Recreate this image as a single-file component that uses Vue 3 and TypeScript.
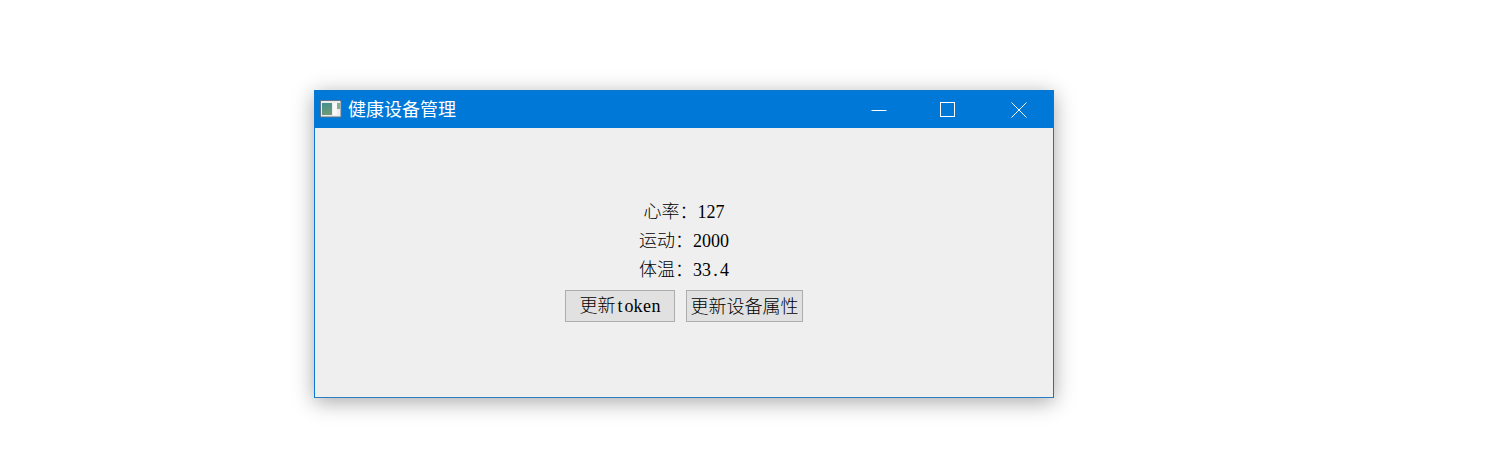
<script setup lang="ts">
const rows: { label: string; value: string }[] = [
  { label: '心率：', value: '127' },
  { label: '运动：', value: '2000' },
  { label: '体温：', value: '33.4' },
]
</script>

<template>
  <div class="desktop">
    <div class="window">
      <div class="titlebar">
        <svg class="app-icon" width="22" height="18" viewBox="0 0 22 18">
          <defs>
            <linearGradient id="pane" x1="0" y1="0" x2="0.2" y2="1">
              <stop offset="0" stop-color="#3f8f8f" />
              <stop offset="1" stop-color="#6f9a78" />
            </linearGradient>
          </defs>
          <rect x="0.5" y="0.5" width="20.5" height="16.5" fill="#ececec" stroke="#5f7488" />
          <rect x="2" y="3" width="10" height="12" fill="url(#pane)" />
          <rect x="13" y="3" width="4" height="12" fill="#f8f8f8" />
          <rect x="17" y="3" width="3" height="6" fill="#7fb08f" />
        </svg>
        <span class="title">健康设备管理</span>
        <div class="controls">
          <div class="control nudge">
            <svg width="16" height="16" viewBox="0 0 16 16"><path d="M0.5 8.5H15.5" stroke="#fff" fill="none" /></svg>
          </div>
          <div class="control">
            <svg width="16" height="16" viewBox="0 0 16 16"><rect x="0.5" y="0.5" width="14" height="14" stroke="#fff" fill="none" /></svg>
          </div>
          <div class="control nudge">
            <svg width="16" height="16" viewBox="0 0 16 16"><path d="M0.5 0.5L15.5 15.5M15.5 0.5L0.5 15.5" stroke="#fff" fill="none" /></svg>
          </div>
        </div>
      </div>
      <div class="client">
        <div v-for="row in rows" :key="row.label" class="row">
          <span>{{ row.label }}</span><span v-for="(ch, i) in row.value" :key="i" class="cell">{{ ch }}</span>
        </div>
        <div class="buttons">
          <button class="btn first" type="button">更新<span v-for="(ch, i) in 'token'" :key="i" class="cell">{{ ch }}</span></button>
          <button class="btn second" type="button">更新设备属性</button>
        </div>
      </div>
    </div>
  </div>
</template>

<style>
html, body { background: #fff; margin: 0; }
</style>

<style scoped>
.desktop {
  position: relative;
  width: 1503px;
  height: 465px;
  overflow: hidden;
  background: #fff;
}
.window {
  position: absolute;
  left: 314px;
  top: 90px;
  width: 740px;
  height: 308px;
  box-sizing: border-box;
  border: 1px solid #0a78d2;
  border-bottom-color: #2a7cc4;
  background: #efefef;
  display: flex;
  flex-direction: column;
  box-shadow: 0 4px 20px rgba(0, 0, 0, 0.34);
}
.titlebar {
  height: 37px;
  flex: none;
  background: #0078d7;
  display: flex;
  align-items: center;
  color: #fff;
}
.app-icon {
  margin-left: 5px;
  margin-right: 6px;
  margin-top: -1px;
}
.title {
  font: 18px/24px "Noto Sans CJK SC", sans-serif;
  margin-bottom: 3px;
}
.controls {
  margin-left: auto;
  display: flex;
  height: 100%;
}
.control {
  width: 70px;
  display: flex;
  align-items: center;
  justify-content: center;
  box-sizing: border-box;
}
.nudge {
  padding-left: 2px;
}
.client {
  flex: 1;
  display: flex;
  flex-direction: column;
  align-items: center;
  padding-top: 68px;
  font: 300 18px/29px "Noto Sans CJK SC", sans-serif;
  color: #000;
}
.row {
  height: 29px;
  white-space: nowrap;
}
.cell {
  display: inline-block;
  width: 9px;
  text-align: center;
  font-family: "Liberation Serif", serif;
  font-size: 18px;
  font-weight: 400;
}
.buttons {
  margin-top: 7px;
  display: flex;
  gap: 11px;
}
.btn {
  height: 32px;
  box-sizing: border-box;
  border: 1px solid #adadad;
  background: #e1e1e1;
  color: #000;
  font: 300 18px/26px "Noto Sans CJK SC", sans-serif;
  padding: 0 0 2px;
  white-space: nowrap;
}
.first { width: 110px; }
.second { width: 117px; }
</style>
